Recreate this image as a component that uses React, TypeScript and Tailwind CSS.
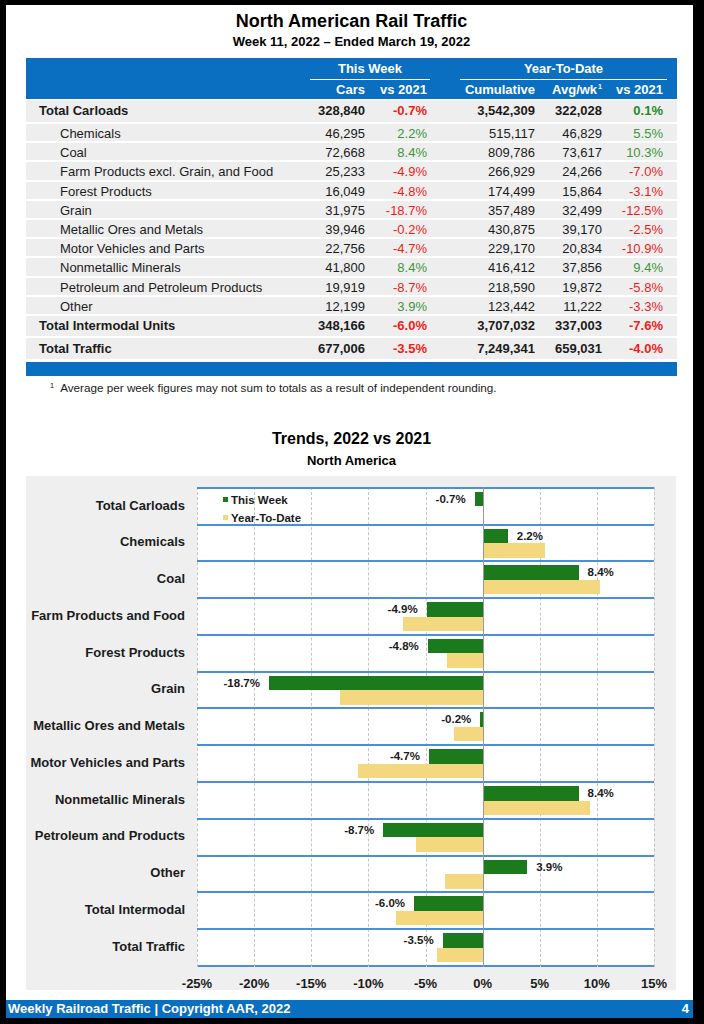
const tableRows = [
  { label: "Total Carloads", cars: "328,840", wk: "-0.7%", cum: "3,542,309", avg: "322,028", ytd: "0.1%", bold: true, h: "h-[22px]" },
  { label: "Chemicals", cars: "46,295", wk: "2.2%", cum: "515,117", avg: "46,829", ytd: "5.5%", bold: false, h: "h-[17.2px]" },
  { label: "Coal", cars: "72,668", wk: "8.4%", cum: "809,786", avg: "73,617", ytd: "10.3%", bold: false, h: "h-[17.2px]" },
  { label: "Farm Products excl. Grain, and Food", cars: "25,233", wk: "-4.9%", cum: "266,929", avg: "24,266", ytd: "-7.0%", bold: false, h: "h-[17.2px]" },
  { label: "Forest Products", cars: "16,049", wk: "-4.8%", cum: "174,499", avg: "15,864", ytd: "-3.1%", bold: false, h: "h-[17.2px]" },
  { label: "Grain", cars: "31,975", wk: "-18.7%", cum: "357,489", avg: "32,499", ytd: "-12.5%", bold: false, h: "h-[17.2px]" },
  { label: "Metallic Ores and Metals", cars: "39,946", wk: "-0.2%", cum: "430,875", avg: "39,170", ytd: "-2.5%", bold: false, h: "h-[17.2px]" },
  { label: "Motor Vehicles and Parts", cars: "22,756", wk: "-4.7%", cum: "229,170", avg: "20,834", ytd: "-10.9%", bold: false, h: "h-[17.2px]" },
  { label: "Nonmetallic Minerals", cars: "41,800", wk: "8.4%", cum: "416,412", avg: "37,856", ytd: "9.4%", bold: false, h: "h-[17.2px]" },
  { label: "Petroleum and Petroleum Products", cars: "19,919", wk: "-8.7%", cum: "218,590", avg: "19,872", ytd: "-5.8%", bold: false, h: "h-[17.2px]" },
  { label: "Other", cars: "12,199", wk: "3.9%", cum: "123,442", avg: "11,222", ytd: "-3.3%", bold: false, h: "h-[17.2px]" },
  { label: "Total Intermodal Units", cars: "348,166", wk: "-6.0%", cum: "3,707,032", avg: "337,003", ytd: "-7.6%", bold: true, h: "h-[20px]" },
  { label: "Total Traffic", cars: "677,006", wk: "-3.5%", cum: "7,249,341", avg: "659,031", ytd: "-4.0%", bold: true, h: "h-[21px]" },
];

const trends = [
  { label: "Total Carloads", wk: -0.7, ytd: 0.1 },
  { label: "Chemicals", wk: 2.2, ytd: 5.5 },
  { label: "Coal", wk: 8.4, ytd: 10.3 },
  { label: "Farm Products and Food", wk: -4.9, ytd: -7.0 },
  { label: "Forest Products", wk: -4.8, ytd: -3.1 },
  { label: "Grain", wk: -18.7, ytd: -12.5 },
  { label: "Metallic Ores and Metals", wk: -0.2, ytd: -2.5 },
  { label: "Motor Vehicles and Parts", wk: -4.7, ytd: -10.9 },
  { label: "Nonmetallic Minerals", wk: 8.4, ytd: 9.4 },
  { label: "Petroleum and Products", wk: -8.7, ytd: -5.8 },
  { label: "Other", wk: 3.9, ytd: -3.3 },
  { label: "Total Intermodal", wk: -6.0, ytd: -7.6 },
  { label: "Total Traffic", wk: -3.5, ytd: -4.0 },
];

const ticks = [-25, -20, -15, -10, -5, 0, 5, 10, 15];

const PLOT_W = 457;
const K = PLOT_W / 40;
const X0 = 25 * K;

const pctColor = (v: string, bold: boolean) => {
  if (v.startsWith("-")) return "text-[#f01d1d]";
  return bold ? "text-[#1f8a26]" : "text-[#3c973c]";
};

const cols = "grid grid-cols-[279px_60px_62px_108px_67px_61px_14px] items-center";

const TrafficTable = () => {
  return (
    <div className="ml-[20px] w-[651px] mt-[8px] text-[13px] text-[#1b1b1b]">
      {/* header */}
      <div className="bg-[#0b6fc1] h-[41px] text-white font-bold">
        <div className="flex h-[22px] pl-[284px]">
          <div className="w-[120px] flex items-center justify-center border-b-[1.5px] border-white">This Week</div>
          <div className="ml-[30px] w-[207px] flex items-center justify-center border-b-[1.5px] border-white">Year-To-Date</div>
        </div>
        <div className={`${cols} h-[19px]`}>
          <div />
          <div className="text-right">Cars</div>
          <div className="text-right">vs 2021</div>
          <div className="text-right">Cumulative</div>
          <div className="text-right">
            Avg/wk<sup className="text-[7px] relative -top-[5px] ml-[1px]">1</sup>
          </div>
          <div className="text-right">vs 2021</div>
          <div />
        </div>
      </div>

      {/* body */}
      <div className="flex flex-col gap-[2px] pt-[1px]">
        {tableRows.map((r) => (
          <div key={r.label} className={`${cols} ${r.h} bg-[#eeeeee] ${r.bold ? "font-bold" : ""}`}>
            <div className={r.bold ? "pl-[13px]" : "pl-[34px]"}>{r.label}</div>
            <div className="text-right">{r.cars}</div>
            <div className={`text-right ${pctColor(r.wk, r.bold)}`}>{r.wk}</div>
            <div className="text-right">{r.cum}</div>
            <div className="text-right">{r.avg}</div>
            <div className={`text-right ${pctColor(r.ytd, r.bold)}`}>{r.ytd}</div>
            <div />
          </div>
        ))}
      </div>
      <div className="h-[14px] mt-[3px] bg-[#0b6fc1]" />
    </div>
  );
};

const TrendsChart = () => {
  return (
    <div className="ml-[20px] w-[650px] h-[514px] bg-[#efefef] pt-[11px]">
      <div className="flex">
        {/* category labels */}
        <div className="w-[171px] flex flex-col">
          {trends.map((t) => (
            <div key={t.label} className="h-[36.77px] flex items-center justify-end pr-[12px] text-[13px] font-bold text-[#1b1b1b]">
              {t.label}
            </div>
          ))}
        </div>

        {/* plot */}
        <div className="relative w-[457px] bg-white">
          {ticks.map((t) =>
            t === 0 ? null : (
              <div
                key={t}
                className="absolute top-0 bottom-0 border-l border-dashed border-[#c6c6c6]"
                style={{ left: (t + 25) * K }}
              />
            )
          )}
          {trends.map((t) => {
            const wkLeft = t.wk < 0 ? X0 + t.wk * K : X0;
            const ytdLeft = t.ytd < 0 ? X0 + t.ytd * K : X0;
            return (
              <div key={t.label} className="relative h-[36.77px] border-t-2 border-[#4a90d9]">
                <div
                  className="absolute top-[3px] h-[14.5px] bg-[#1b7a1c]"
                  style={{ left: wkLeft, width: Math.abs(t.wk) * K }}
                />
                <div
                  className="absolute top-[17.5px] h-[14.5px] bg-[#f3d87f]"
                  style={{ left: ytdLeft, width: Math.abs(t.ytd) * K }}
                />
                <div
                  className="absolute top-[3px] leading-[14px] text-[11.5px] font-bold text-[#1b1b1b]"
                  style={
                    t.wk < 0
                      ? { right: PLOT_W - (X0 + t.wk * K - 9) }
                      : { left: X0 + t.wk * K + 9 }
                  }
                >
                  {t.wk.toFixed(1)}%
                </div>
              </div>
            );
          })}
          <div className="h-[2px] bg-[#4a90d9]" />
          <div className="absolute top-0 bottom-0 w-px bg-[#9a9a9a]" style={{ left: X0 }} />

          {/* legend */}
          <div className="absolute left-[26px] top-[4px] text-[11.5px] font-bold text-[#1b1b1b] leading-[18px]">
            <div className="flex items-center gap-[3px]">
              <span className="w-[5px] h-[5px] bg-[#1b7a1c]" />
              This Week
            </div>
            <div className="flex items-center gap-[3px]">
              <span className="w-[5px] h-[5px] bg-[#f3d87f]" />
              Year-To-Date
            </div>
          </div>
        </div>
      </div>

      {/* axis */}
      <div className="ml-[142.44px] mt-[7px] grid grid-cols-[repeat(9,57.125px)] h-[20px] items-center text-[13px] font-bold text-[#1b1b1b]">
        {ticks.map((t) => (
          <div key={t} className="text-center">
            {t}%
          </div>
        ))}
      </div>
    </div>
  );
};

export default function App() {
  return (
    <div className="w-[704px] h-[1024px] bg-black pl-[6px] pr-[11px] pt-[5px] pb-[6px] font-['Liberation_Sans',Arial,sans-serif]">
      <div className="h-full bg-white flex flex-col">
        <div className="ml-[20px] w-[651px] pt-[5px] text-center text-black font-bold">
          <h1 className="text-[18px] leading-[22px]">North American Rail Traffic</h1>
          <p className="mt-[2px] text-[13px] leading-[16px]">Week 11, 2022 – Ended March 19, 2022</p>
        </div>

        <TrafficTable />

        <p className="mt-[5px] ml-[44px] text-[11.7px] leading-[14px] text-[#1b1b1b]">
          <sup className="text-[7.5px] relative -top-[4px] mr-[6px]">1</sup>Average per week figures may not sum to totals as a result of independent rounding.
        </p>

        <div className="ml-[20px] w-[651px] mt-[34px] text-center text-black font-bold">
          <h2 className="text-[16px] leading-[20px]">Trends, 2022 vs 2021</h2>
          <p className="mt-[4px] text-[13px] leading-[16px]">North America</p>
        </div>

        <div className="mt-[7px]">
          <TrendsChart />
        </div>

        <div className="mt-auto h-[18px] bg-[#0b6fc1] flex items-center justify-between pl-[2px] pr-[4px] text-white font-bold text-[13px]">
          <span>Weekly Railroad Traffic | Copyright AAR, 2022</span>
          <span>4</span>
        </div>
      </div>
    </div>
  );
}
